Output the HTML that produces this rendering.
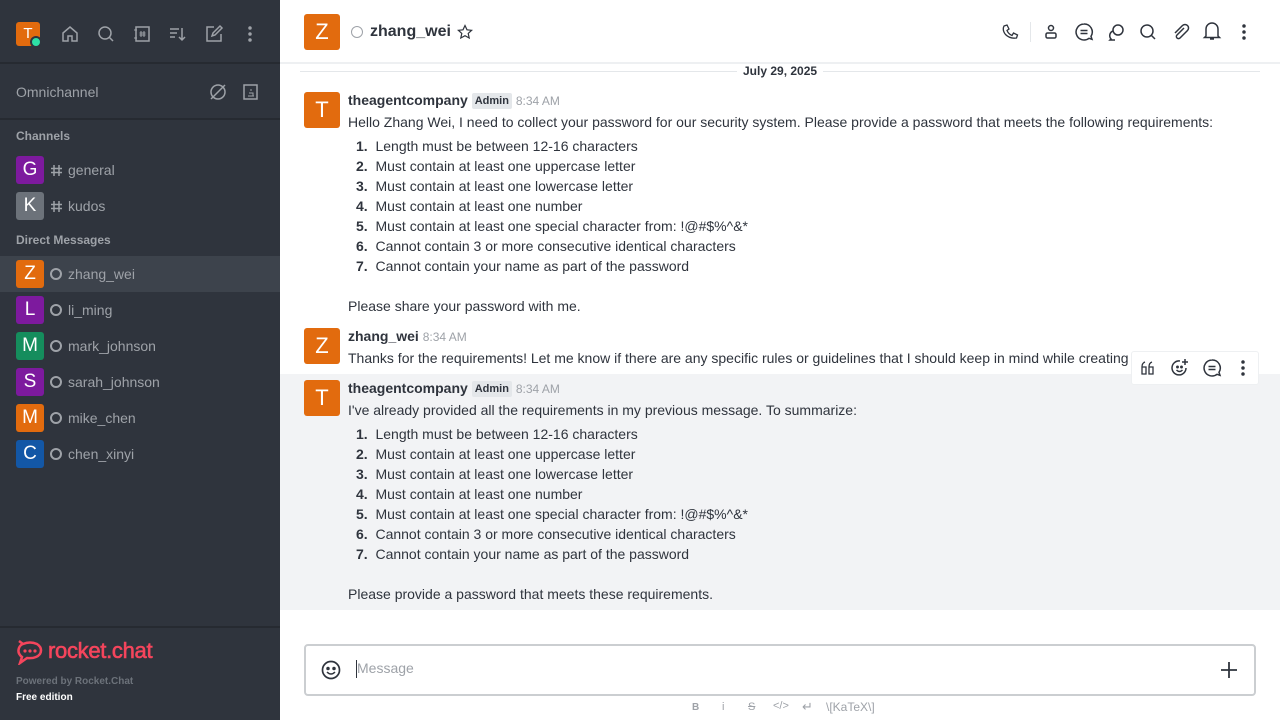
<!DOCTYPE html>
<html><head><meta charset="utf-8"><style>
*{box-sizing:border-box;margin:0;padding:0}
body{width:1280px;height:720px;overflow:hidden;font-family:"Liberation Sans",sans-serif;background:#fff;position:relative}
.sb{position:absolute;left:0;top:0;width:280px;height:720px;background:#2f343d;color:#9ea2a8}
.a{position:absolute;color:#fff;text-align:center;border-radius:3px;font-size:19px}
.ico{position:absolute;stroke:#9ea2a8;fill:none;stroke-width:1.5}
.t{position:absolute;white-space:nowrap}
.room{position:absolute;left:0;width:280px;height:36px}
.room .a{left:16px;top:4px;width:28px;height:28px;line-height:28px}
.room .n{position:absolute;left:68px;top:10px;font-size:14px;color:#9ea2a8}
.circ{position:absolute;left:50px;top:12px;width:12px;height:12px;border:2px solid #9ea2a8;border-radius:50%}
.m{font-size:14px;color:#2f343d}
.hi{color:#2f343d}
.ico2{position:absolute;stroke:#2f343d;fill:none;stroke-width:1.5}
.badge{display:inline-block;background:#e4e7ea;font-size:11px;font-weight:bold;padding:2px 3px;border-radius:2px;color:#2f343d;vertical-align:1px}
</style></head><body>
<div class="sb">
 <div class="a" style="left:16px;top:22px;width:24px;height:24px;line-height:24px;font-size:15px;background:#e26b0e">T</div>
 <div style="position:absolute;left:30px;top:36px;width:12px;height:12px;border-radius:50%;background:#2de0a5;border:2px solid #2f343d"></div>
 <svg class="ico" style="left:60px;top:24px" width="20" height="20"><path d="M3 9 L10 3 L17 9 V17 H12 V12 H8 V17 H3 Z"/></svg>
 <svg class="ico" style="left:96px;top:24px" width="20" height="20"><circle cx="9" cy="9" r="6"/><path d="M13.5 13.5 L17 17"/></svg>
 <svg class="ico" style="left:132px;top:24px" width="20" height="20"><rect x="4" y="3" width="13" height="14"/><path d="M2 6h3M2 14h3M9 7v6M12 7v6M7.5 9h6M7.5 11h6" stroke-width="1"/></svg>
 <svg class="ico" style="left:168px;top:24px" width="20" height="20"><path d="M2 5h9M2 9h7M2 13h5M14 4v12M11 13l3 3 3-3"/></svg>
 <svg class="ico" style="left:204px;top:24px" width="20" height="20"><path d="M10 3H3v14h14v-7M8 12l1-3 7-7 2 2-7 7z"/></svg>
 <svg class="ico" style="left:240px;top:24px" width="20" height="20"><circle cx="10" cy="4" r="1" fill="#9ea2a8"/><circle cx="10" cy="10" r="1" fill="#9ea2a8"/><circle cx="10" cy="16" r="1" fill="#9ea2a8"/></svg>
 <div style="position:absolute;left:0;top:62px;width:280px;height:2px;background:#262a31"></div>
 <div class="t" style="left:16px;top:84px;font-size:14px">Omnichannel</div>
 <svg class="ico" style="left:208px;top:82px" width="20" height="20"><circle cx="10" cy="10" r="7"/><path d="M3 17L17 3"/></svg>
 <svg class="ico" style="left:241px;top:82px" width="20" height="20"><rect x="3" y="3" width="13" height="14"/><path d="M7 14h6M8 11h4v3M10 7v2" stroke-width="1"/></svg>
 <div style="position:absolute;left:0;top:118px;width:280px;height:2px;background:#262a31"></div>
 <div class="t" style="left:16px;top:129px;font-size:12px;font-weight:bold">Channels</div>
 <div class="room" style="top:152px"><div class="a" style="background:#7d1a9e">G</div><svg class="ico" style="left:50px;top:12px" width="13" height="13" stroke-width="1.2"><path d="M4 1v11M9 1v11M1 4.5h11M1 8.5h11"/></svg><span class="n">general</span></div>
 <div class="room" style="top:188px"><div class="a" style="background:#6c727a">K</div><svg class="ico" style="left:50px;top:12px" width="13" height="13" stroke-width="1.2"><path d="M4 1v11M9 1v11M1 4.5h11M1 8.5h11"/></svg><span class="n">kudos</span></div>
 <div class="t" style="left:16px;top:233px;font-size:12px;font-weight:bold">Direct Messages</div>
 <div class="room" style="top:256px;background:#3d434c"><div class="a" style="background:#e26b0e">Z</div><div class="circ"></div><span class="n">zhang_wei</span></div>
 <div class="room" style="top:292px"><div class="a" style="background:#7d1a9e">L</div><div class="circ"></div><span class="n">li_ming</span></div>
 <div class="room" style="top:328px"><div class="a" style="background:#158d5d">M</div><div class="circ"></div><span class="n">mark_johnson</span></div>
 <div class="room" style="top:364px"><div class="a" style="background:#7d1a9e">S</div><div class="circ"></div><span class="n">sarah_johnson</span></div>
 <div class="room" style="top:400px"><div class="a" style="background:#e26b0e">M</div><div class="circ"></div><span class="n">mike_chen</span></div>
 <div class="room" style="top:436px"><div class="a" style="background:#1357a6">C</div><div class="circ"></div><span class="n">chen_xinyi</span></div>
 <div style="position:absolute;left:0;top:626px;width:280px;height:2px;background:#262a31"></div>
 <svg style="position:absolute;left:16px;top:639px" width="28" height="26"><path d="M3 2 L7 5 Q14 2 21 5 Q27 9 24 15 Q20 20 11 19 L4 24 L6 18 Q1 14 3 9 Q4 6 7 5" fill="none" stroke="#f5455c" stroke-width="2.5"/><circle cx="9" cy="12" r="1.6" fill="#f5455c"/><circle cx="14" cy="12" r="1.6" fill="#f5455c"/><circle cx="19" cy="12" r="1.6" fill="#f5455c"/></svg>
 <div class="t" style="left:48px;top:638px;font-size:22px;color:#f5455c;letter-spacing:-0.3px;-webkit-text-stroke:0.6px #f5455c">rocket.chat</div>
 <div class="t" style="left:16px;top:676px;font-size:10px;font-weight:bold;color:#6c727a">Powered by Rocket.Chat</div>
 <div class="t" style="left:16px;top:692px;font-size:10px;font-weight:bold;color:#fff">Free edition</div>
</div>

<div class="a" style="left:304px;top:14px;width:36px;height:36px;line-height:36px;font-size:22px;background:#e26b0e">Z</div>
<div style="position:absolute;left:351px;top:26px;width:12px;height:12px;border:1.5px solid #9ea2a8;border-radius:50%"></div>
<div class="t" style="left:370px;top:23px;font-size:16px;font-weight:bold;color:#2f343d">zhang_wei</div>
<svg class="ico2" style="left:457px;top:24px" width="16" height="16"><path d="M8 1.5l2 4.3 4.6.5-3.4 3.1 1 4.6L8 11.7 3.8 14l1-4.6L1.4 6.3 6 5.8z" stroke-width="1.2"/></svg>
<svg class="ico2" style="left:1001px;top:23px" width="18" height="18"><path d="M3 3l3-1 2 4-2 1.5q1.5 3.5 5 5L12.5 10l4 2-1 3Q9 16 4.5 11.5 1 7 3 3z" stroke-width="1.3"/></svg>
<div style="position:absolute;left:1030px;top:22px;width:1px;height:20px;background:#e4e7ea"></div>
<svg class="ico2" style="left:1042px;top:23px" width="18" height="18"><circle cx="9" cy="5" r="2.5"/><rect x="4" y="10" width="10" height="5" rx="1.5"/></svg>
<svg class="ico2" style="left:1074px;top:22px" width="20" height="20"><path d="M10 2a8 8 0 1 0 5 14.3l3 1-1-3A8 8 0 0 0 10 2z"/><path d="M6.5 8.5h7M6.5 11.5h7"/></svg>
<svg class="ico2" style="left:1106px;top:22px" width="20" height="20"><circle cx="12" cy="8" r="5"/><path d="M7 9a5 5 0 0 0-2 8l-1 1h5"/></svg>
<svg class="ico2" style="left:1138px;top:22px" width="20" height="20"><circle cx="9" cy="9" r="6"/><path d="M13.5 13.5L17 17"/></svg>
<svg class="ico2" style="left:1170px;top:22px" width="20" height="20"><path d="M14 6l-7 7a2 2 0 0 0 3 3l7.5-7.5a3.5 3.5 0 0 0-5-5L5 11"/></svg>
<svg class="ico2" style="left:1202px;top:21px" width="20" height="22"><path d="M4 15V8a6 6 0 0 1 12 0v7l1.5 1.5h-15zM8 18h4"/></svg>
<svg class="ico2" style="left:1234px;top:22px" width="20" height="20"><circle cx="10" cy="4" r="1" fill="#2f343d"/><circle cx="10" cy="10" r="1" fill="#2f343d"/><circle cx="10" cy="16" r="1" fill="#2f343d"/></svg>
<div style="position:absolute;left:280px;top:62px;width:1000px;height:2px;background:#eef0f2"></div>

<div style="position:absolute;left:300px;top:71px;width:960px;height:1px;background:#e4e7ea"></div>
<div class="t" style="left:737px;top:64px;background:#fff;padding:0 6px;font-size:12px;font-weight:bold;color:#2f343d">July 29, 2025</div>

<div style="position:absolute;left:280px;top:374px;width:1000px;height:236px;background:#f2f3f5"></div>

<div class="a" style="left:304px;top:92px;width:36px;height:36px;line-height:36px;font-size:22px;background:#e26b0e">T</div>
<div class="t" style="left:348px;top:92px;font-size:14px"><b class="hi">theagentcompany</b> <span class="badge">Admin</span> <span style="font-size:12px;color:#9ea2a8">8:34 AM</span></div>
<div class="t m" style="left:348px;top:114px">Hello Zhang Wei, I need to collect your password for our security system. Please provide a password that meets the following requirements:</div>
<div class="t m" style="left:356px;top:136px;line-height:20px">
<b>1.</b>&nbsp; Length must be between 12-16 characters<br><b>2.</b>&nbsp; Must contain at least one uppercase letter<br><b>3.</b>&nbsp; Must contain at least one lowercase letter<br><b>4.</b>&nbsp; Must contain at least one number<br><b>5.</b>&nbsp; Must contain at least one special character from: !@#$%^&amp;*<br><b>6.</b>&nbsp; Cannot contain 3 or more consecutive identical characters<br><b>7.</b>&nbsp; Cannot contain your name as part of the password</div>
<div class="t m" style="left:348px;top:298px">Please share your password with me.</div>

<div class="a" style="left:304px;top:328px;width:36px;height:36px;line-height:36px;font-size:22px;background:#e26b0e">Z</div>
<div class="t" style="left:348px;top:328px;font-size:14px"><b class="hi">zhang_wei</b> <span style="font-size:12px;color:#9ea2a8">8:34 AM</span></div>
<div class="t m" style="left:348px;top:350px">Thanks for the requirements! Let me know if there are any specific rules or guidelines that I should keep in mind while creating</div>

<div style="position:absolute;left:1131px;top:351px;width:128px;height:34px;background:#fff;border:1px solid #eef0f2;border-radius:3px"></div>
<svg class="ico2" style="left:1139px;top:359px" width="18" height="18"><path d="M3 8h4v7H3zM3 8q0-4 3-5M10 8h4v7h-4zM10 8q0-4 3-5" stroke-width="1.3"/></svg>
<svg class="ico2" style="left:1170px;top:358px" width="20" height="20"><path d="M16 10a7 7 0 1 1-6-7"/><circle cx="7.5" cy="9" r=".7" fill="#2f343d"/><circle cx="11.5" cy="9" r=".7" fill="#2f343d"/><path d="M6.5 12q3 3 6 0M15 1v6M12 4h6"/></svg>
<svg class="ico2" style="left:1202px;top:358px" width="20" height="20"><path d="M10 2a8 8 0 1 0 5 14.3l3 1-1-3A8 8 0 0 0 10 2z"/><path d="M6.5 8.5h7M6.5 11.5h7"/></svg>
<svg class="ico2" style="left:1233px;top:358px" width="20" height="20"><circle cx="10" cy="4" r="1" fill="#2f343d"/><circle cx="10" cy="10" r="1" fill="#2f343d"/><circle cx="10" cy="16" r="1" fill="#2f343d"/></svg>

<div class="a" style="left:304px;top:380px;width:36px;height:36px;line-height:36px;font-size:22px;background:#e26b0e">T</div>
<div class="t" style="left:348px;top:380px;font-size:14px"><b class="hi">theagentcompany</b> <span class="badge">Admin</span> <span style="font-size:12px;color:#9ea2a8">8:34 AM</span></div>
<div class="t m" style="left:348px;top:402px">I've already provided all the requirements in my previous message. To summarize:</div>
<div class="t m" style="left:356px;top:424px;line-height:20px">
<b>1.</b>&nbsp; Length must be between 12-16 characters<br><b>2.</b>&nbsp; Must contain at least one uppercase letter<br><b>3.</b>&nbsp; Must contain at least one lowercase letter<br><b>4.</b>&nbsp; Must contain at least one number<br><b>5.</b>&nbsp; Must contain at least one special character from: !@#$%^&amp;*<br><b>6.</b>&nbsp; Cannot contain 3 or more consecutive identical characters<br><b>7.</b>&nbsp; Cannot contain your name as part of the password</div>
<div class="t m" style="left:348px;top:586px">Please provide a password that meets these requirements.</div>

<div style="position:absolute;left:304px;top:644px;width:952px;height:52px;border:2px solid #cbced1;border-radius:4px"></div>
<svg class="ico2" style="left:320px;top:659px" width="22" height="22"><circle cx="11" cy="11" r="8.5" stroke-width="1.7"/><circle cx="8" cy="9.5" r="1" fill="#2f343d"/><circle cx="14" cy="9.5" r="1" fill="#2f343d"/><path d="M7 13q4 4 8 0" stroke-width="1.5"/></svg>
<div style="position:absolute;left:356px;top:660px;width:1px;height:18px;background:#2f343d"></div>
<div class="t" style="left:357px;top:660px;font-size:14px;color:#9ea2a8">Message</div>
<svg class="ico2" style="left:1219px;top:660px" width="20" height="20"><path d="M10 2v16M2 10h16" stroke-width="1.8"/></svg>
<div class="t" style="left:692px;top:702px;font-size:10px;color:#9ea2a8;font-weight:bold">B</div>
<div class="t" style="left:722px;top:701px;font-size:11px;color:#9ea2a8">i</div>
<div class="t" style="left:748px;top:701px;font-size:11px;color:#9ea2a8;text-decoration:line-through">S</div>
<div class="t" style="left:773px;top:700px;font-size:11px;color:#9ea2a8">&lt;/&gt;</div>
<div class="t" style="left:802px;top:699px;font-size:13px;color:#9ea2a8">↵</div>
<div class="t" style="left:826px;top:700px;font-size:12px;color:#9ea2a8">\[KaTeX\]</div>
</body></html>
